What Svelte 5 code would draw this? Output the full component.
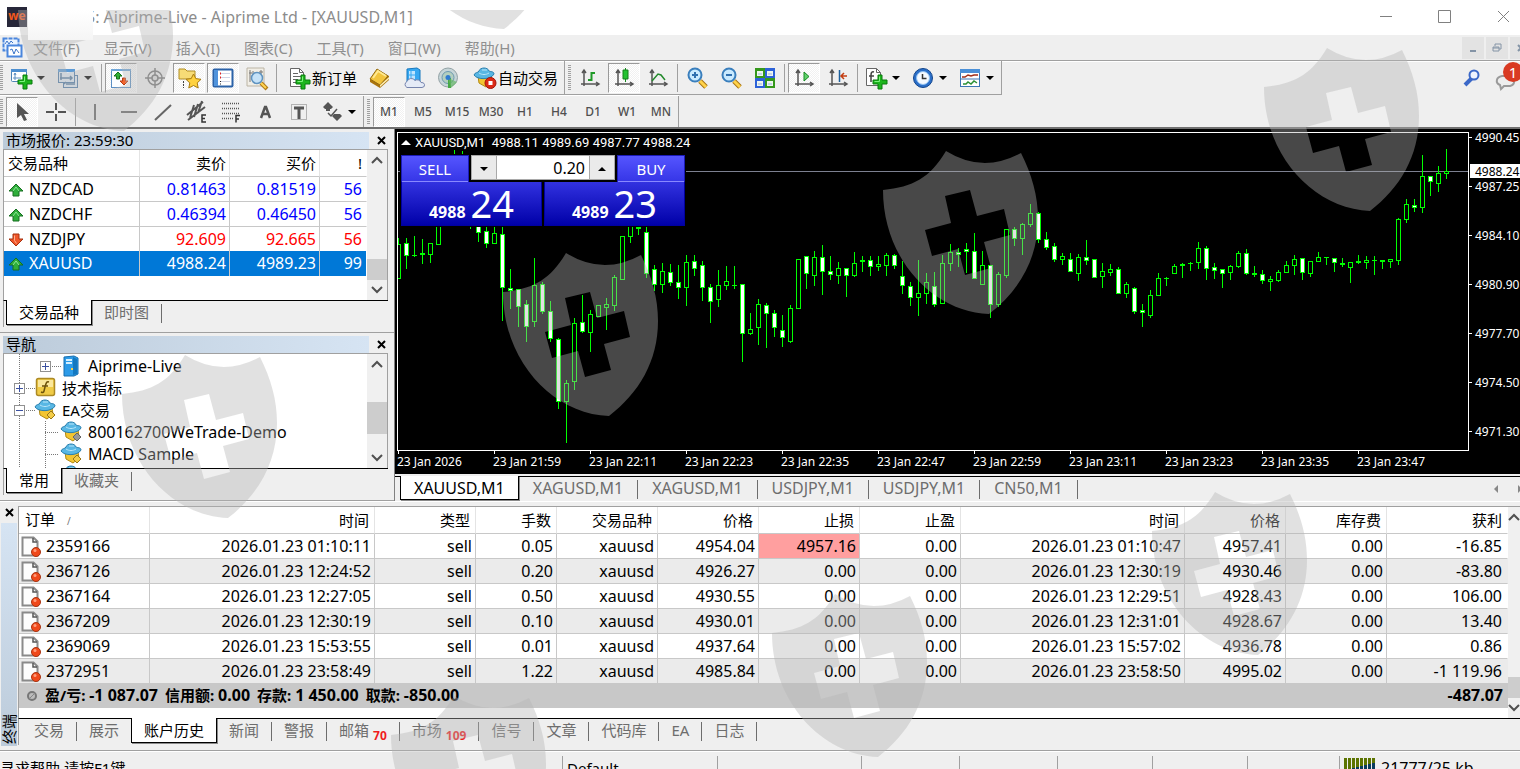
<script>
  let lots = $state('0.20');
  let period = $state('M1');

  const menus = ['文件(F)', '显示(V)', '插入(I)', '图表(C)', '工具(T)', '窗口(W)', '帮助(H)'];
  const periods = ['M1', 'M5', 'M15', 'M30', 'H1', 'H4', 'D1', 'W1', 'MN'];

  // Toolbar groups: each item is an icon button, '|' is a divider
  const standard = [
    { icon: 'newChart', drop: true, name: '新图表' },
    { icon: 'profiles', drop: true, name: '配置文件' },
    '|',
    { icon: 'market', on: true, name: '市场报价' },
    { icon: 'target', name: '数据窗口' },
    { icon: 'folder', on: true, name: '导航' },
    { icon: 'terminal', on: true, name: '终端' },
    { icon: 'tester', name: '策略测试' },
    '|',
    { icon: 'order', text: '新订单', name: '新订单' },
    { icon: 'book', name: 'MetaEditor' },
    { icon: 'cloud', name: '云' },
    { icon: 'signal', name: '信号' },
    { icon: 'auto', text: '自动交易', name: '自动交易' },
  ];
  const charting = [
    { icon: 'bars', name: '柱状图' },
    { icon: 'candles', on: true, name: '蜡烛图' },
    { icon: 'line', name: '折线图' },
    '|',
    { icon: 'zoomIn', name: '放大' },
    { icon: 'zoomOut', name: '缩小' },
    { icon: 'tiles', name: '平铺' },
    '|',
    { icon: 'scroll', on: true, name: '自动滚动' },
    { icon: 'shift', name: '图表平移' },
    '|',
    { icon: 'indicators', drop: true, name: '指标' },
    { icon: 'clock', drop: true, name: '时段' },
    { icon: 'templates', drop: true, name: '模板' },
  ];
  const drawing = [
    { icon: 'cursor', on: true, name: '光标' },
    { icon: 'cross', name: '十字线' },
    '|',
    { icon: 'vline', name: '垂直线' },
    { icon: 'hline', name: '水平线' },
    { icon: 'trend', name: '趋势线' },
    { icon: 'channel', name: '通道' },
    { icon: 'fibo', name: '斐波那契' },
    { icon: 'textA', name: '文字' },
    { icon: 'label', name: '文字标签' },
    { icon: 'arrows', drop: true, name: '箭头' },
  ];

  const plus = '<path d="M13 8h4v5h5v4h-5v5h-4v-5h-5v-4h5z" fill="#1db51d" stroke="#087a0c"/><path d="M14.500 9.500v5h-5" fill="none" stroke="#7df27d"/>';
  const axes = '<path d="M5 3v16M2 17h18M3 6l2-3 2 3M17 15l3 2-3 2" fill="none" stroke="#555" stroke-width="1.500"/>';
  const lens = '<path d="M14 14l6 6" stroke="#a87412" stroke-width="5"/><path d="M14 14l6 6" stroke="#ffd24a" stroke-width="3"/><circle cx="9" cy="8" r="6.500" fill="#c9eaff" stroke="#3a7fbd" stroke-width="2"/>';
  const hat = '<path d="M4 9l13 0 1 6-6 5-7-4z" fill="#f3c531" stroke="#b18a14"/><path d="M0 8c1-3 4-2 5-4 1-4 9-4 10 0 1 1 5 0 5 3-3 6-17 6-20 1z" fill="#58b7e4" stroke="#2b7fae"/><path d="M5 6c3 2 7 2 10 0M8 3h5" fill="none" stroke="#b9e6fa"/>';

  const icons = {
    newChart: '<rect x="1.500" y="2.500" width="15" height="12" rx="1" fill="#fff" stroke="#4d84b5"/><path d="M1 2h16v3H1z" fill="#4d8fd0"/><path d="M5 6v7M3 11h8M4 8l1-2 1 2" fill="none" stroke="#5b8ec0"/>' + plus,
    profiles: '<rect x="6.500" y="8.500" width="14" height="12" fill="#dfeaf3" stroke="#4f7ca8"/><rect x="1.500" y="2.500" width="16" height="13" fill="#dfeaf3" stroke="#4f7ca8"/><path d="M1 2h17v3H1z" fill="#5d9bd6"/><path d="M4 6v7M3 11h12M9 17h9M13 9l2 2-2 2M9 15l-2 2" fill="none" stroke="#557ba0" stroke-width="1.500"/>',
    market: '<rect x="1.500" y="2.500" width="19" height="18" fill="#fbfdff" stroke="#5a8fc4"/><path d="M1 2h20v2H1z" fill="#6fa6d8"/><path d="M8 5l4 4H9.500v3h-3V9H4z" fill="#2fae35" stroke="#17731c"/><path d="M14 18l4-4h-2.500v-3h-3v3H10z" fill="#f2642c" stroke="#b73b12"/>',
    target: '<g fill="none" stroke="#777" stroke-width="1.500"><circle cx="11" cy="11" r="7"/><path d="M11 1v20M1 11h20"/><circle cx="11" cy="11" r="3" fill="#ddd"/></g>',
    folder: '<path d="M1 2h6l2 2h8v8H1z" fill="#f7dc76" stroke="#b08d24"/><path d="M5.500 14v7" stroke="#444" stroke-dasharray="2 1"/><path d="M15.500 7l2.300 4.600 5.200.7-3.800 3.600 1 5.100-4.700-2.500-4.700 2.500 1-5.100L8 12.300l5.200-.7z" fill="#ffd23f" stroke="#a87b10"/>',
    terminal: '<rect x="1.500" y="2.500" width="19" height="17" rx="1" fill="#fff" stroke="#2b62a8" stroke-width="2"/><path d="M2 3h4v16H2z" fill="#4f93dc"/><path d="M9 6.500h9M9 10.500h9M9 14.500h9" stroke="#cfd5e6"/><path d="M8 6.500h1M8 10.500h1" stroke="#d22" stroke-width="2"/><path d="M8 14.500h1M8 17h1" stroke="#222"/>',
    tester: '<path d="M1 1h17v18H1z" fill="#f1eee6" stroke="#bbb4a4"/><path d="M4 3v12M7 4v4M15 3v8M3 6h3M13 5h4" stroke="#777" fill="none"/><path d="M15 16l6 6" stroke="#b17c19" stroke-width="4"/><path d="M15 16l5 5" stroke="#ffd452" stroke-width="2"/><circle cx="11" cy="11" r="5.500" fill="#c5e2f8" stroke="#5f93c0" stroke-width="1.500"/>',
    order: '<path d="M2.500 1.500h9l4 4v14h-13z" fill="#fff" stroke="#666"/><path d="M11.500 1.500v4h4M5 6.500h5M5 9.500h8M5 12.500h5M5 15.500h4" fill="none" stroke="#666"/>' + plus,
    book: '<path d="M1 13L9 3l11 6v4l-9 8-10-6z" fill="#a9730c"/><path d="M1 12L8 2l11 7-8 9z" fill="#f2c43d" stroke="#946a10"/><path d="M11 20l9-8v-2l-9 8z" fill="#fff0b4"/><path d="M4 11l5-7 8 5" fill="none" stroke="#ffe991" stroke-width="2"/>',
    cloud: '<path d="M4 2l10-1 3 2v12H4z" fill="#36a8f2" stroke="#1678be"/><path d="M6 4h6v8H6z" fill="#bfe5ff"/><path d="M8 4v8M6 8h6" stroke="#36a8f2"/><path d="M4 20.500a4 3.500 0 010-6 4.500 4.500 0 018-1 4 4 0 016 2 3 2.500 0 011 5z" fill="#e5ebf7" stroke="#7684ad"/>',
    signal: '<circle cx="11" cy="10.500" r="9.500" fill="#c6d5d8" stroke="#93a2a5"/><circle cx="11" cy="10.500" r="6" fill="#b4cfbf" stroke="#6c99b0"/><path d="M11 11h3v10h-3z" fill="#45a845"/><path d="M11 11l9 4-6 6z" fill="#66b866" opacity=".7"/><circle cx="11" cy="10.500" r="2.500" fill="#2f7bd0"/>',
    auto: hat + '<circle cx="16.500" cy="16" r="5.500" fill="#dc2a17" stroke="#a3160a"/><path d="M14.500 14h4v4h-4z" fill="#fff"/>',
    ea: hat + '<path d="M16 12l4 4-4 4-4-4z" fill="#f4cd48" stroke="#9a7717"/>',
    eaOff: hat + '<path d="M16 12l4 4-4 4-4-4z" fill="#999" stroke="#666"/>',
    bars: axes + '<path d="M12.500 5v9M9 13h3M13 6h3" stroke="#1f9a28" stroke-width="2" fill="none"/>',
    candles: axes + '<path d="M12.500 1v14" stroke="#148a1c"/><path d="M10 3h5v9h-5z" fill="#22c22f" stroke="#128019"/>',
    line: axes + '<path d="M5 14l6-7 3 1 4 5" stroke="#238a2c" fill="none" stroke-width="1.500"/>',
    zoomIn: lens + '<path d="M9 5v6M6 8h6" stroke="#2f70b0" stroke-width="2"/>',
    zoomOut: lens + '<path d="M6 8h6" stroke="#2f70b0" stroke-width="2"/>',
    tiles: '<path d="M1 1h10v10H1zM11 11h10v10H11z" fill="#35981c"/><path d="M11 1h10v10H11zM1 11h10v10H1z" fill="#2d62d8"/><path d="M3 4h6v5H3zM13 4h6v5h-6zM3 14h6v5H3zM13 14h6v5h-6z" fill="#eef6ee"/><path d="M4 7h4M14 7h4M4 17h4M14 17h4" stroke="#9bb5e0"/>',
    scroll: axes + '<path d="M11 5l5 4.500-5 4.500z" fill="#5fd06a" stroke="#158a20"/>',
    shift: axes + '<path d="M12.500 3v12" stroke="#1b5f9c" stroke-width="1.500"/><path d="M14 9h6M17 6l-3 3 3 3" stroke="#c33d12" stroke-width="1.500" fill="none"/>',
    indicators: '<path d="M1.500 1.500h10l4 4v13h-14z" fill="#fff" stroke="#666"/><path d="M11.500 1.500v4h4" fill="none" stroke="#666"/><path d="M9 5c-3-1-3 2-3 4v6M4 9h5" fill="none" stroke="#444" stroke-width="1.500"/>' + plus,
    clock: '<circle cx="11" cy="11" r="9.500" fill="#2b6fc9" stroke="#12458c"/><circle cx="11" cy="11" r="6.500" fill="#f4f9ff" stroke="#8fc0f2"/><path d="M10.500 7v4.500h4" fill="none" stroke="#333" stroke-width="1.500"/>',
    templates: '<rect x="1.500" y="2.500" width="19" height="17" fill="#fff" stroke="#3c76b4"/><path d="M1 2h20v4H1z" fill="#4a90d8"/><path d="M1 12h20" stroke="#3c76b4"/><path d="M3 10h3l3-2 3 1 3-1h4" stroke="#a12f1a" stroke-width="1.500" fill="none"/><path d="M4 17h3l2-2 3 2 3-3 3 2" stroke="#2a8f33" stroke-width="1.500" fill="none"/>',
    cursor: '<path d="M6 2v15l4-3 3 6 3-1-3-6h5z" fill="#555"/>',
    cross: '<path d="M11 2v7M11 13v7M1 11h8M13 11h8" stroke="#555" stroke-width="2"/>',
    vline: '<path d="M11 3v16" stroke="#666" stroke-width="2"/>',
    hline: '<path d="M3 11h16" stroke="#666" stroke-width="2"/>',
    trend: '<path d="M3 19L19 4" stroke="#666" stroke-width="2"/>',
    channel: '<path d="M1 14L17 1M2 19L19 6M4 17l4-13M8 16l4-13M12 12l4-12" stroke="#555" stroke-width="2"/><path d="M20 14h-4v7h4M16 17.500h3" fill="none" stroke="#333" stroke-width="1.500"/>',
    fibo: '<path d="M2 2.500h18M2 7.500h18M2 12.500h18M2 17.500h11" stroke="#555" stroke-width="1.500" stroke-dasharray="1 1"/><path d="M20 14.500h-4v7M16 18h3" fill="none" stroke="#333" stroke-width="1.500"/>',
    textA: '<path d="M7 17L11 6h1l4 11M8 13h7" fill="none" stroke="#555" stroke-width="2.500"/>',
    label: '<path d="M3.500 3.500h15v15h-15z" fill="none" stroke="#777" stroke-dasharray="1 1"/><path d="M6 7h10M11 7v11" stroke="#555" stroke-width="3"/>',
    arrows: '<path d="M2 6l5-5 5 5-2 2H4zM11 15l2-2h6l2 2-5 5zM5 6h4v4H5z" fill="#555"/><path d="M7 12l3 3 6-7" fill="none" stroke="#555" stroke-width="1.500"/>',
    server: '<path d="M3 2l10-1 4 2v16l-4 2H3z" fill="#2d9be8" stroke="#176fb0"/><path d="M12 2l4 2v15l-4 1z" fill="#1378c0"/><path d="M5 5h6M5 8h6" stroke="#d5f0ff" stroke-width="2"/><path d="M10 14h2" stroke="#ffd23f" stroke-width="2"/>',
    func: '<rect x="1.500" y="1.500" width="18" height="17" rx="2" fill="#f0cb47" stroke="#ad8a25" stroke-width="1.500"/><path d="M3 3h15v7H3z" fill="#fae79c"/><path d="M14 5c-3-1-3 2-4 5l-1 4c0 1-1 2-3 1M7 9h6" fill="none" stroke="#6d520a" stroke-width="1.500"/>',
    up: '<path d="M8 2l7 7h-4v5H5V9H1z" fill="#2fae3b" stroke="#176f20"/><path d="M5 9l3-4 3 4" fill="none" stroke="#8de896"/>',
    down: '<path d="M8 14L1 7h4V2h6v5h4z" fill="#f0562a" stroke="#a5310f"/><path d="M6.500 3.500v5l2 3" fill="none" stroke="#ffb08f"/>',
    doc: '<path d="M1.500 1.500h11l4 4v14h-15z" fill="#fdfdfd" stroke="#8a8a8a" stroke-width="2"/><path d="M12 2v4h4" fill="none" stroke="#555" stroke-width="1.500"/><circle cx="15" cy="16" r="4.500" fill="#f0491b" stroke="#a93410"/><circle cx="14" cy="14.500" r="1.500" fill="#ff9d7b"/>',
    mdi: '<rect x="1.500" y="1.500" width="15" height="12" fill="#eaf3ff" stroke="#4a86dd" stroke-width="2" stroke-dasharray="4 1"/><rect x="5.500" y="8.500" width="14" height="11" fill="#fff" stroke="#4a86dd" stroke-width="2"/><path d="M3 7l2-3 2 3 2-3 2 2M8 13l2-1 2 5 2-5 3 4" fill="none" stroke="#3b74c8"/>',
  };

  const symbols = [
    { name: 'NZDCAD', bid: '0.81463', ask: '0.81519', spread: 56, dir: 'up' },
    { name: 'NZDCHF', bid: '0.46394', ask: '0.46450', spread: 56, dir: 'up' },
    { name: 'NZDJPY', bid: '92.609', ask: '92.665', spread: 56, dir: 'down' },
    { name: 'XAUUSD', bid: '4988.24', ask: '4989.23', spread: 99, dir: 'up', selected: true },
  ];

  const tree = [
    { level: 2, icon: 'server', text: 'Aiprime-Live', box: '+' },
    { level: 1, icon: 'func', text: '技术指标', box: '+', cjk: true },
    { level: 1, icon: 'ea', text: 'EA交易', box: '-', cjk: true },
    { level: 2, icon: 'eaOff', text: '800162700WeTrade-Demo' },
    { level: 2, icon: 'ea', text: 'MACD Sample' },
    { level: 2, icon: 'ea', text: '' },
  ];

  // high, body top, body bottom, low, kind (h hollow, f filled, d doji)
  const TOP = 133;
  const STEP = 8;
  const candles = `238 244 279 279 h,238 243 256 269 f,236 255 255 257 d,239 253 255 264 d,243 243 255 263 h,215 215 245 245 h,
160 165 200 205 h,150 160 200 205 h,151 160 210 215 f,190 195 222 229 f,195 200 233 242 f,220 231 244 248 f,220 233 244 244 h,
220 234 288 321 f,269 288 291 309 f,289 289 307 327 f,300 304 327 342 f,258 285 322 327 h,282 284 312 314 f,301 311 339 342 f,
338 339 402 409 f,380 383 402 443 h,318 323 382 390 h,295 322 332 333 f,310 314 333 352 h,305 305 317 317 h,298 304 308 330 h,
275 277 306 311 h,236 236 280 280 h,215 220 237 243 h,215 220 229 235 d,226 232 274 278 f,265 269 285 291 f,263 271 285 293 h,
264 272 283 286 f,265 282 288 299 f,255 262 288 306 h,255 261 269 276 f,261 265 288 301 f,284 287 302 323 f,270 285 300 307 h,
266 281 286 290 h,266 285 285 289 d,284 284 334 362 f,313 329 334 335 h,299 304 328 345 h,303 305 314 348 f,310 313 328 337 f,
315 330 338 347 f,305 308 342 343 h,259 259 309 309 h,256 256 274 289 f,251 257 276 286 h,245 257 272 295 f,256 271 275 280 f,
262 268 276 284 h,268 268 276 297 f,252 263 276 277 h,256 260 262 272 d,256 260 267 276 f,256 264 267 271 h,253 255 266 276 h,
254 255 266 269 f,261 276 286 294 f,282 286 298 306 f,260 293 298 316 h,273 282 294 304 h,272 286 305 307 f,255 263 304 304 h,
244 252 264 271 h,248 252 255 267 f,243 249 252 273 f,233 251 279 279 f,251 265 285 285 h,265 265 305 318 f,272 274 305 307 h,
229 229 276 278 h,227 229 239 246 f,223 224 239 255 h,204 213 225 227 h,212 213 240 243 f,232 239 248 250 f,243 246 260 262 f,
253 256 260 265 h,253 259 272 272 f,254 257 274 281 h,240 257 261 265 f,259 259 278 278 f,263 271 277 288 h,264 269 273 276 h,
267 269 294 294 f,282 284 294 298 h,287 288 312 314 f,304 310 313 327 f,290 295 316 318 h,273 278 296 296 h,277 278 279 286 d,
264 266 274 274 h,263 264 266 278 d,262 263 264 271 d,242 248 263 269 h,246 248 269 280 f,263 267 271 279 f,269 269 274 288 f,
265 266 273 280 h,251 253 267 268 h,249 253 274 275 f,266 273 275 277 d,270 274 281 284 f,276 279 282 291 h,270 272 281 282 h,
261 265 273 273 h,255 259 266 275 h,258 258 273 280 f,261 261 274 277 h,252 257 262 262 h,257 257 258 265 d,258 258 263 272 f,
258 263 265 267 d,262 262 268 283 h,255 261 263 264 d,256 260 263 269 h,256 260 261 275 d,260 260 262 269 d,259 259 262 268 h,
218 219 261 265 h,199 204 220 223 h,199 205 208 212 f,155 176 208 213 h,176 176 182 196 f,166 173 184 192 h,149 171 174 179 h`
    .split(',')
    .map((row, i) => {
      const [high, top, bottom, low, kind] = row.trim().split(' ');
      return { x: i * STEP, high: high - TOP, top: top - TOP, bottom: bottom - TOP, low: low - TOP, kind };
    });

  const prices = ['4990.45', '4987.25', '4984.10', '4980.90', '4977.70', '4974.50', '4971.30'];
  const times = ['23 Jan 2026', '23 Jan 21:59', '23 Jan 22:11', '23 Jan 22:23', '23 Jan 22:35', '23 Jan 22:47',
    '23 Jan 22:59', '23 Jan 23:11', '23 Jan 23:23', '23 Jan 23:35', '23 Jan 23:47'];
  const chartTabs = ['XAUUSD,M1', 'XAGUSD,M1', 'XAGUSD,M1', 'USDJPY,M1', 'USDJPY,M1', 'CN50,M1'];

  const headers = ['时间', '类型', '手数', '交易品种', '价格', '止损', '止盈', '时间', '价格', '库存费', '获利'];
  const orders = [
    ['2359166', '2026.01.23 01:10:11', 'sell', '0.05', 'xauusd', '4954.04', '4957.16', '0.00', '2026.01.23 01:10:47', '4957.41', '0.00', '-16.85'],
    ['2367126', '2026.01.23 12:24:52', 'sell', '0.20', 'xauusd', '4926.27', '0.00', '0.00', '2026.01.23 12:30:19', '4930.46', '0.00', '-83.80'],
    ['2367164', '2026.01.23 12:27:05', 'sell', '0.50', 'xauusd', '4930.55', '0.00', '0.00', '2026.01.23 12:29:51', '4928.43', '0.00', '106.00'],
    ['2367209', '2026.01.23 12:30:19', 'sell', '0.10', 'xauusd', '4930.01', '0.00', '0.00', '2026.01.23 12:31:01', '4928.67', '0.00', '13.40'],
    ['2369069', '2026.01.23 15:53:55', 'sell', '0.01', 'xauusd', '4937.64', '0.00', '0.00', '2026.01.23 15:57:02', '4936.78', '0.00', '0.86'],
    ['2372951', '2026.01.23 23:58:49', 'sell', '1.22', 'xauusd', '4985.84', '0.00', '0.00', '2026.01.23 23:58:50', '4995.02', '0.00', '-1 119.96'],
  ];
  const totals = [['盈/亏:', '-1 087.07'], ['信用额:', '0.00'], ['存款:', '1 450.00'], ['取款:', '-850.00']];
  const terminalTabs = [
    { text: '交易' }, { text: '展示' }, { text: '账户历史', active: true }, { text: '新闻' }, { text: '警报' },
    { text: '邮箱', count: 70 }, { text: '市场', count: 109 }, { text: '信号' }, { text: '文章' },
    { text: '代码库' }, { text: 'EA' }, { text: '日志' },
  ];

  const shields = [[18, -32], [398, -134], [1264, 48], [883, 151], [503, 253], [122, 355], [1152, 492], [772, 594], [391, 696]];
</script>

{#snippet icon(name, size = 22)}
  <svg class="icon" width={size} height={size} viewBox="0 0 {size} {size}" aria-hidden="true">{@html icons[name]}</svg>
{/snippet}

{#snippet tools(items)}
  {#each items as item}
    {#if item === '|'}
      <span class="divider"></span>
    {:else}
      <button class="tool" class:on={item.on} class:drop={item.drop} class:wide={item.text} aria-label={item.name}>
        {@render icon(item.icon)}
        {#if item.text}<span>{item.text}</span>{/if}
        {#if item.drop}<i class="caret"></i>{/if}
      </button>
    {/if}
  {/each}
{/snippet}

{#snippet scrollbar(kind)}
  <div class="scrollbar {kind}">
    <button aria-label="向上滚动"><svg width="12" height="8"><path d="M1 7l5-5 5 5" /></svg></button>
    <span class="before"></span>
    <span class="thumb"></span>
    <span class="after"></span>
    <button aria-label="向下滚动"><svg width="12" height="8"><path d="M1 1l5 5 5-5" /></svg></button>
  </div>
{/snippet}

{#snippet closeMark()}
  <svg width="9" height="9" viewBox="0 0 9 9"><path d="M1 1l7 7M8 1l-7 7" stroke="#000" stroke-width="2" /></svg>
{/snippet}

<div class="app">
  <header class="titlebar">
    <span class="logo">we</span>
    <span class="title">5: Aiprime-Live - Aiprime Ltd - [XAUUSD,M1]</span>
    <div class="window-buttons">
      <button aria-label="最小化"><svg width="13" height="13"><path d="M1 6.500h12" /></svg></button>
      <button aria-label="最大化"><svg width="13" height="13"><path d="M.5.5h12v12H.5z" /></svg></button>
      <button aria-label="关闭"><svg width="13" height="13"><path d="M1 1l11 11M12 1L1 12" /></svg></button>
    </div>
  </header>

  <nav class="menubar">
    <span class="mdi-icon">{@render icon('mdi')}</span>
    {#each menus as menu}
      <button class="menu">{menu}</button>
    {/each}
    <div class="mdi-buttons">
      <button aria-label="最小化窗口"><svg width="12" height="12"><path d="M3 9h6" stroke-width="2" /></svg></button>
      <button aria-label="还原窗口"><svg width="12" height="12"><path d="M4 4V2h6v5H8M2 5h6v4H2zM2 6h6" /></svg></button>
      <button aria-label="关闭窗口"><svg width="12" height="12"><path d="M3 3l6 6M9 3l-6 6" stroke-width="2" /></svg></button>
    </div>
  </nav>

  <div class="toolbars">
    <div class="toolbar">
      <span class="grip first"></span>
      {@render tools(standard)}
      <span class="edge"></span>
      <span class="grip"></span>
      {@render tools(charting)}
      <span class="edge"></span>
    </div>
    <div class="alerts">
      <button class="search" aria-label="搜索">
        <svg width="18" height="18"><path d="M2 16l7-7" stroke="#3b68c8" stroke-width="4" /><circle cx="11" cy="6" r="4.500" fill="#eef3ff" stroke="#3b68c8" stroke-width="2" /></svg>
      </button>
      <button class="chat" aria-label="消息">
        <svg width="22" height="22"><path d="M6 19l-1-4c-5-2-4-8 2-9h9c5 2 4 9-1 10H9z" fill="#eee" stroke="#9a9a9a" stroke-width="2" /></svg>
        <span class="badge">1</span>
      </button>
    </div>
  </div>
  <div class="toolbars second">
    <div class="toolbar">
      <span class="grip first"></span>
      {@render tools(drawing)}
      <span class="edge"></span>
      <span class="grip"></span>
      {#each periods as p}
        <button class="tool period" class:on={p === period} onclick={() => (period = p)}>{p}</button>
      {/each}
      <span class="edge"></span>
    </div>
  </div>

  <main>
    <aside>
      <section class="panel">
        <div class="panel-title"><h2>市场报价: 23:59:30</h2><button aria-label="关闭">{@render closeMark()}</button></div>
        <div class="box market">
          <table>
            <colgroup><col class="c-symbol" /><col class="c-bid" /><col class="c-bid" /><col /></colgroup>
            <thead><tr><th>交易品种</th><th>卖价</th><th>买价</th><th>!</th></tr></thead>
            <tbody>
              {#each symbols as s}
                <tr class={s.dir} class:selected={s.selected}>
                  <td>{@render icon(s.dir, 16)}<span>{s.name}</span></td>
                  <td>{s.bid}</td>
                  <td>{s.ask}</td>
                  <td>{s.spread}</td>
                </tr>
              {/each}
            </tbody>
          </table>
          {@render scrollbar('low')}
        </div>
        <div class="tabs">
          <button class="tab active">交易品种</button>
          <button class="tab">即时图</button>
        </div>
      </section>

      <section class="panel">
        <div class="panel-title"><h2>导航</h2><button aria-label="关闭">{@render closeMark()}</button></div>
        <div class="box navigator">
          <ul>
            {#each tree as node}
              <li class="level{node.level}" class:cjk={node.cjk} class:leaf={!node.box}>
                <span class="joint">{#if node.box}<i class="toggle" class:plus={node.box === '+'}></i>{/if}</span>
                {@render icon(node.icon)}
                <span>{node.text}</span>
              </li>
            {/each}
          </ul>
          {@render scrollbar('mid')}
        </div>
        <div class="tabs">
          <button class="tab active">常用</button>
          <button class="tab">收藏夹</button>
        </div>
      </section>
    </aside>

    <section class="workspace">
      <div class="chart">
        <div class="plot">
          <svg class="series" shape-rendering="crispEdges">
            <rect x="0" y="38" width="100%" height="1" fill="#7c8090" />
            {#each candles as c}
              <rect x={c.x} y={c.high} width="1" height={c.low - c.high} fill="#0f0" />
              <rect x={c.x - 2} y={c.top} width="5" height={Math.max(c.bottom - c.top, 1)} fill="#0f0" />
              {#if c.kind !== 'd'}
                <rect x={c.x - 1} y={c.top + 1} width="3" height={Math.max(c.bottom - c.top - 2, 1)} fill={c.kind === 'f' ? '#fff' : '#000'} />
              {/if}
            {/each}
          </svg>
          <div class="quote"><i></i>XAUUSD,M1&nbsp; 4988.11 4989.69 4987.77 4988.24</div>
          <div class="trade">
            <div class="trade-top">
              <button class="side">SELL</button>
              <div class="lots">
                <button aria-label="减少"><i class="caret"></i></button>
                <input aria-label="手数" bind:value={lots} />
                <button aria-label="增加"><i class="caret flip"></i></button>
              </div>
              <button class="side">BUY</button>
            </div>
            <div class="trade-bottom">
              <button><b>4988</b><span>24</span></button>
              <button><b>4989</b><span>23</span></button>
            </div>
          </div>
        </div>
        <svg class="price-axis">
          {#each prices as p, i}
            <rect x="0" y={5 + i * 49} width="3" height="1" fill="#fff" />
            <text x="6" y={10 + i * 49}>{p}</text>
          {/each}
          <rect x="1" y="32" width="60" height="14" fill="#fff" />
          <text class="now" x="6" y="44">4988.24</text>
        </svg>
        <svg class="time-axis">
          {#each times as t, i}
            <rect x={1 + i * 96} y="0" width="1" height="3" fill="#fff" />
            <text x={i * 96} y="15">{t}</text>
          {/each}
        </svg>
      </div>
      <div class="chart-tabs">
        {#each chartTabs as t, i}
          <button class="tab" class:active={i === 0}>{t}</button>
        {/each}
        <span class="pager">
          <svg width="30" height="10"><path d="M5 1v8L1 5zM25 1v8l4-4z" fill="#888" /></svg>
        </span>
      </div>
    </section>
  </main>

  <section class="terminal">
    <div class="strip">
      <button aria-label="关闭">{@render closeMark()}</button>
      <div class="strip-title"><span>终端</span></div>
    </div>
    <div class="terminal-body">
      <div class="history">
        <table>
          <colgroup>
            <col class="w131" /><col class="w225" /><col class="w101" /><col class="w81" /><col class="w101" /><col class="w101" />
            <col class="w101" /><col class="w101" /><col class="w224" /><col class="w101" /><col class="w101" /><col />
          </colgroup>
          <thead>
            <tr><th>订单 <small>/</small></th>{#each headers as h}<th>{h}</th>{/each}</tr>
          </thead>
          <tbody>
            {#each orders as row}
              <tr>
                {#each row as cell, i}
                  <td class:stop={i === 6 && cell !== '0.00'}>
                    {#if i === 0}{@render icon('doc')}<span>{cell}</span>{:else}{cell}{/if}
                  </td>
                {/each}
              </tr>
            {/each}
          </tbody>
          <tfoot>
            <tr>
              <td colspan="11">
                <svg class="icon" width="20" height="16"><circle cx="11" cy="8" r="4" fill="#bbb" stroke="#777" stroke-width="2" /><path d="M8 11l6-6" stroke="#888" /></svg>
                {#each totals as [label, value]}<span class="total">{label} <b>{value}</b></span>{/each}
              </td>
              <td><b>-487.07</b></td>
            </tr>
          </tfoot>
        </table>
        {@render scrollbar('low narrow')}
      </div>
      <div class="tabs">
        {#each terminalTabs as t, i}
          <button class="tab" class:active={t.active} class:before-active={terminalTabs[i + 1]?.active}>
            {t.text}{#if t.count}<sub>{t.count}</sub>{/if}
          </button>
        {/each}
      </div>
    </div>
  </section>

  <footer class="status">
    <span class="help">寻求帮助,请按F1键</span>
    <span class="profile">Default</span>
    <span class="s144"></span><span class="s98"></span><span class="s98"></span><span class="s95"></span>
    <span class="s95"></span><span class="s92"></span>
    <span class="traffic">
      <svg width="32" height="20" shape-rendering="crispEdges">
        {#each Array(8) as _, i}
          <rect x={i * 4} y="0" width="3" height="20" fill="#0a3c5c" />
          <rect x={i * 4} y="0" width="3" height={12 - i} fill="#5c7400" />
        {/each}
      </svg>
      21777/25 kb
    </span>
  </footer>

  <div class="overlay" aria-hidden="true">
    <svg width="100%" height="100%">
      {#each shields as [x, y]}
        <path
          transform="translate({x} {y - 10})"
          fill-rule="evenodd"
          d="M63 0Q100 23 138 2C149 24 155 45 155 68C155 108 136 140 106 163C50 161 0 108 0 39C30 36 47 27 63 0ZM62 45L87 39L94 65L121 58L127 84L101 91L108 117L82 124L75 98L49 105L42 79L68 72Z"
        />
      {/each}
    </svg>
    <span class="mask"></span>
  </div>
</div>

<style>
  :global(body) {
    margin: 0;
    overflow: hidden;
  }

  .app {
    position: relative;
    display: flex;
    flex-direction: column;
    height: 100vh;
    overflow: hidden;
    background: #efefef;
    color: #000;
    font: 15px/22px "Noto Sans", "Noto Sans CJK SC", sans-serif;
  }

  .app > * {
    flex: none;
  }

  button {
    margin: 0;
    padding: 0;
    border: 0;
    background: none;
    color: inherit;
    font: inherit;
    white-space: nowrap;
  }

  table {
    border-spacing: 0;
    table-layout: fixed;
    width: 100%;
  }

  th,
  td {
    box-sizing: border-box;
    padding: 0 3px;
    font-weight: 400;
    text-align: right;
    white-space: nowrap;
  }

  .icon {
    flex: none;
    overflow: visible;
  }

  /* Title and menu */
  .titlebar {
    display: flex;
    align-items: center;
    height: 33px;
    padding-bottom: 2px;
    background: #fff;
    color: #8c8c8c;
    font-size: 16px;
  }

  .logo {
    width: 20px;
    height: 20px;
    margin-left: 7px;
    background: #28283a;
    color: #f2581d;
    font-size: 12px;
    font-weight: 700;
    line-height: 18px;
    text-align: center;
  }

  .title {
    margin-left: 59px;
  }

  .window-buttons {
    display: flex;
    gap: 46px;
    margin-left: auto;
    padding-right: 10px;
  }

  .window-buttons svg,
  .mdi-buttons svg {
    display: block;
    fill: none;
    stroke: #808080;
  }

  .menubar {
    display: flex;
    align-items: center;
    height: 25px;
    color: #8f8f8f;
  }

  .mdi-icon {
    width: 33px;
    padding-left: 2px;
    box-sizing: border-box;
    line-height: 0;
  }

  .menu {
    margin-right: 24px;
  }

  .mdi-buttons {
    display: flex;
    gap: 2px;
    margin-left: auto;
    margin-right: -12px;
  }

  .mdi-buttons button {
    padding: 5px;
    background: #e3e3e3;
  }

  .mdi-buttons svg {
    stroke: #8494a6;
  }

  /* Toolbars */
  .toolbars {
    display: flex;
    justify-content: space-between;
    height: 34px;
    border-top: 1px solid #a0a0a0;
    box-shadow: inset 0 1px #fff;
  }

  .toolbars.second {
    height: 32px;
    border-top: 0;
    border-bottom: 2px solid #707070;
    box-shadow: none;
  }

  .toolbar {
    display: flex;
    align-items: center;
    border-bottom: 1px solid #a0a0a0;
  }

  .second .toolbar {
    border-bottom: 0;
    border-top: 1px solid #fff;
  }

  .grip {
    width: 3px;
    height: 26px;
    margin: 0 2px 0 3px;
    background: repeating-linear-gradient(#a0a0a0 0 1px, #efefef 1px 2px);
  }

  .grip.first {
    margin: 0 2px 0 0;
  }

  .edge {
    align-self: stretch;
    width: 1px;
    background: #a0a0a0;
  }

  .divider {
    width: 1px;
    height: 28px;
    margin: 0 2px;
    background: #a0a0a0;
  }

  .tool {
    display: flex;
    align-items: center;
    justify-content: center;
    box-sizing: border-box;
    width: 32px;
    height: 30px;
    margin: 0 1px;
    border: 1px solid transparent;
  }

  .tool.on {
    border-color: #9a9a9a #fff #fff #9a9a9a;
    background: repeating-conic-gradient(#fff 0 25%, #f1f1f1 0 50%) 0 0 / 2px 2px;
  }

  .tool.drop {
    width: 45px;
    justify-content: flex-start;
    padding-left: 3px;
    gap: 5px;
  }

  .tool.wide {
    width: auto;
    gap: 2px;
    padding: 0 4px 0 7px;
  }

  .tool.period {
    color: #505050;
    font: 500 12px "Noto Sans", sans-serif;
  }

  .caret {
    border: 4px solid transparent;
    border-top-color: #000;
    border-bottom: 0;
  }

  .caret.flip {
    transform: scaleY(-1);
  }

  .alerts {
    display: flex;
    align-items: center;
    gap: 14px;
  }

  .alerts svg {
    display: block;
    fill: none;
  }

  .chat {
    position: relative;
    width: 25px;
    padding-top: 6px;
  }

  .badge {
    position: absolute;
    left: 8px;
    top: -2px;
    width: 20px;
    height: 20px;
    border-radius: 10px;
    background: #d93a22;
    color: #fff;
    line-height: 20px;
    text-align: center;
  }

  /* Docked panels */
  main {
    display: flex;
  }

  aside {
    width: 394px;
  }

  .panel {
    padding: 3px 6px 5px 3px;
    border-bottom: 1px solid #a0a0a0;
  }

  .panel-title {
    display: flex;
    align-items: center;
    height: 17px;
  }

  .panel-title h2 {
    flex: 1;
    margin: 0 6px 0 0;
    padding-left: 3px;
    background: linear-gradient(90deg, #bccbda, #d6e4f3);
    font-size: 15px;
    font-weight: 400;
    line-height: 17px;
  }

  .panel-title button,
  .strip button {
    width: 13px;
    line-height: 0;
  }

  .box {
    display: flex;
    border: solid #a0a0a0;
    border-width: 1px 1px 0;
    background: #fff;
  }

  .market {
    height: 150px;
    align-items: flex-start;
  }

  .market > table {
    flex: 1;
    width: auto;
  }

  .c-symbol {
    width: 136px;
  }

  .c-bid {
    width: 90px;
  }

  .market th,
  .market td {
    height: 25px;
    border-right: 1px solid #c8c8c8;
    border-bottom: 1px solid #c8c8c8;
  }

  .market th {
    height: 27px;
    border-right-color: #e4e4e4;
  }

  .market td {
    font-size: 16px;
    line-height: 23px;
  }

  .market tr > :first-child {
    padding-left: 4px;
    text-align: left;
  }

  .market td:first-child span {
    margin-left: 5px;
  }

  .market td .icon {
    vertical-align: -3px;
  }

  .market tr > :last-child {
    padding-right: 4px;
    border-right-color: transparent;
  }

  .market .up td:not(:first-child) {
    color: #00f;
  }

  .market .down td:not(:first-child) {
    color: #f00;
  }

  .market .down td {
    height: 24px;
    border-bottom: 0;
  }

  .market .selected td,
  .market .selected td:not(:first-child) {
    border-bottom: 0;
    background: #0078d7;
    background-clip: padding-box;
    color: #fff;
  }

  .scrollbar {
    display: flex;
    flex: none;
    flex-direction: column;
    align-self: stretch;
    width: 20px;
    background: #f0f0f0;
  }

  .scrollbar button {
    height: 20px;
    line-height: 0;
  }

  .scrollbar path {
    fill: none;
    stroke: #505050;
    stroke-width: 2;
  }

  .thumb {
    height: 21px;
    background: #cdcdcd;
  }

  .low .before {
    flex: 1;
  }

  .mid .before {
    flex: 2;
  }

  .mid .after {
    flex: 1;
  }

  .mid .thumb {
    height: 32px;
  }

  .narrow {
    width: 12px;
    overflow: hidden;
  }

  .tabs {
    display: flex;
    height: 26px;
    padding-left: 2px;
    border-top: 1px solid #000;
    border-left: 1px solid #a0a0a0;
  }

  .tab {
    position: relative;
    box-sizing: border-box;
    height: 22px;
    padding: 0 13px 0 12px;
    color: #6d6d6d;
  }

  .tab:not(.active):not(.before-active)::after {
    content: '';
    position: absolute;
    right: 0;
    top: 3px;
    bottom: 0;
    border-right: 1px solid #6d6d6d;
  }

  .tab.active {
    height: 25px;
    margin-top: -1px;
    padding: 0 12px;
    border: 1px solid #000;
    border-top: 0;
    background: #fff;
    box-shadow: 1px 1px #8a8a8a;
    color: #000;
  }

  .tab sub {
    padding-left: 4px;
    color: #f01c1c;
    font-size: 12px;
    font-weight: 700;
    line-height: 12px;
  }

  .navigator {
    height: 114px;
  }

  .navigator ul {
    position: relative;
    flex: 1;
    margin: 0;
    padding: 1px 0 0;
    overflow: hidden;
    list-style: none;
    background: repeating-linear-gradient(transparent 0 1px, #fff 1px 2px), linear-gradient(90deg, transparent 15px, #777 15px 16px, transparent 16px);
  }

  .navigator li {
    display: flex;
    align-items: center;
    height: 22px;
    font-size: 16px;
  }

  .navigator li.cjk {
    font-size: 15px;
  }

  .navigator li > span:last-child {
    margin-left: 5px;
  }

  .joint {
    display: flex;
    align-items: center;
    width: 21px;
    height: 22px;
    margin-left: 10px;
    background: repeating-linear-gradient(90deg, #777 0 1px, transparent 1px 2px) 10px 11px / 11px 1px no-repeat;
  }

  .level2 .joint {
    margin-left: 36px;
  }

  .leaf .joint {
    background:
      repeating-linear-gradient(90deg, #777 0 1px, transparent 1px 2px) 5px 11px / 14px 1px no-repeat,
      repeating-linear-gradient(#777 0 1px, transparent 1px 2px) 5px 0 / 1px 100% no-repeat;
  }

  .toggle {
    width: 9px;
    height: 9px;
    border: 1px solid #919191;
    background: linear-gradient(#3a50a0, #3a50a0) 50% 50% / 7px 1px no-repeat, #fff;
  }

  .toggle.plus {
    background: linear-gradient(#3a50a0, #3a50a0) 50% 50% / 7px 1px no-repeat, linear-gradient(#3a50a0, #3a50a0) 50% 50% / 1px 7px no-repeat, #fff;
  }

  /* Chart window */
  .workspace {
    display: flex;
    flex: 1;
    flex-direction: column;
    min-width: 0;
    border-left: 1px solid #808080;
  }

  .chart {
    display: grid;
    flex: 1;
    grid-template-columns: 1fr 51px;
    grid-template-rows: 1fr 23px;
    padding: 3px 0 0 2px;
    background: #000;
    color: #fff;
    font: 12px "Noto Sans", sans-serif;
  }

  .plot {
    position: relative;
    min-width: 0;
    border: 1px solid #fff;
    overflow: hidden;
  }

  .series {
    position: absolute;
    width: 100%;
    height: 100%;
  }

  .price-axis,
  .time-axis {
    display: block;
    width: 100%;
    height: 100%;
    fill: #fff;
  }

  .time-axis {
    grid-column: 1 / 3;
  }

  .now {
    fill: #000;
  }

  .quote {
    position: relative;
    display: flex;
    align-items: center;
    height: 19px;
    padding-left: 3px;
    font: 13px Roboto, sans-serif;
    white-space: pre;
  }

  .quote i {
    margin-right: 4px;
    border: 5px solid transparent;
    border-top: 0;
    border-bottom-color: #fff;
  }

  .trade {
    position: absolute;
    left: 2px;
    top: 21px;
    width: 284px;
    padding: 1px;
    background: #000;
    font: 16px "Noto Sans", sans-serif;
  }

  .trade-top {
    display: flex;
    gap: 2px;
    height: 27px;
  }

  .side {
    flex: none;
    width: 68px;
    background: linear-gradient(#5555ff, #3535e6);
    border: 1px solid #1a1ab8;
    border-bottom: 0;
    box-shadow: inset 0 -1px #8888ff;
    font-size: 15px;
  }

  .lots {
    display: flex;
    flex: 1;
    min-width: 0;
    height: 25px;
    box-sizing: border-box;
    border: 1px solid #a9a9a9;
  }

  .lots button {
    flex: none;
    width: 24px;
    background: #eaeaea;
    line-height: 0;
  }

  .lots .caret {
    display: inline-block;
    border-top-color: #000;
  }

  .lots input {
    flex: 1;
    min-width: 0;
    padding: 0 4px;
    border: solid #a9a9a9;
    border-width: 0 1px;
    background: #fff;
    color: #000;
    font: inherit;
    text-align: right;
  }

  .trade-bottom {
    display: flex;
    gap: 2px;
  }

  .trade-bottom button {
    display: flex;
    flex: 1;
    align-items: baseline;
    justify-content: center;
    gap: 5px;
    height: 44px;
    border: 1px solid #0000a0;
    border-top: 0;
    background: linear-gradient(#3232e0, #0000a8);
    line-height: 42px;
  }

  .trade-bottom span {
    font-size: 38px;
  }

  .chart-tabs {
    display: flex;
    height: 24px;
    margin-top: 2px;
    padding-left: 5px;
    border-top: 1px solid #000;
    font-size: 16px;
  }

  .chart-tabs .tab {
    padding: 0 15px 0 14px;
  }

  .chart-tabs .tab.active {
    height: 24px;
    padding: 0 13px;
  }

  .pager {
    align-self: center;
    margin-left: auto;
    margin-right: -3px;
    line-height: 0;
  }

  /* Terminal */
  .terminal {
    display: flex;
    padding-top: 4px;
    border-top: 1px solid #fff;
    border-bottom: 1px solid #a0a0a0;
  }

  .strip {
    display: flex;
    flex-direction: column;
    align-items: center;
    width: 18px;
    padding: 2px 0 4px;
    box-sizing: border-box;
  }

  .strip button {
    padding-bottom: 6px;
  }

  .strip-title {
    flex: 1;
    display: flex;
    align-items: flex-end;
    width: 16px;
    background: linear-gradient(#d6e4f3, #bccbda);
  }

  .strip-title span {
    writing-mode: vertical-rl;
    text-orientation: sideways;
    transform: rotate(180deg);
    line-height: 16px;
    padding-top: 2px;
  }

  .terminal-body {
    flex: 1;
    min-width: 0;
    padding-bottom: 5px;
  }

  .history {
    display: flex;
    align-items: flex-start;
    height: 211px;
    border-top: 1px solid #a0a0a0;
    border-left: 1px solid #a0a0a0;
    background: #fff;
  }

  .history > table {
    flex: 1;
    width: auto;
    min-width: 0;
  }

  .w131 { width: 131px; }
  .w225 { width: 225px; }
  .w224 { width: 224px; }
  .w101 { width: 101px; }
  .w81 { width: 81px; }

  .history th,
  .history td {
    height: 25px;
    border-right: 1px solid #c8c8c8;
    border-bottom: 1px solid #c8c8c8;
    font-size: 16px;
    line-height: 23px;
  }

  .history th {
    height: 27px;
    padding-right: 5px;
    border-right-color: #e4e4e4;
    font-size: 15px;
  }

  .history tr > :first-child {
    text-align: left;
    padding-left: 2px;
  }

  .history th:first-child {
    padding-left: 6px;
  }

  .history small {
    padding-left: 8px;
    color: #777;
    font-size: 10px;
  }

  .history td:first-child .icon {
    vertical-align: -6px;
  }

  .history td:first-child > span {
    margin-left: 3px;
  }

  .history tr > :last-child {
    padding-right: 5px;
    border-right-color: transparent;
  }

  .history tbody tr:nth-child(even) {
    background: #ebebeb;
  }

  .history tbody tr:last-child td {
    height: 24px;
    border-bottom: 0;
  }

  .history .stop {
    background: #ff9f9f;
    background-clip: padding-box;
  }

  .history tfoot td {
    border: 0;
    background: #c8c8c8;
    font-size: 15px;
    font-weight: 700;
  }

  .history tfoot td:first-child .icon {
    vertical-align: -3px;
  }

  .history b {
    font-size: 16px;
    font-weight: 700;
  }

  .history tfoot td:first-child > .total {
    margin-left: 0;
    margin-right: 7px;
  }

  .terminal .tabs {
    padding-left: 3px;
  }

  .terminal .tab.active {
    margin-left: -1px;
  }

  .status {
    display: flex;
    height: 32px;
    padding-top: 4px;
    border-top: 1px solid #fff;
    line-height: 24px;
  }

  .status > span {
    box-sizing: border-box;
    border-right: 1px solid #a0a0a0;
  }

  .help { width: 563px; }
  .status .profile { width: 155px; padding-left: 4px; }
  .s144 { width: 144px; }
  .s98 { width: 98px; }
  .s95 { width: 95px; }
  .s92 { width: 92px; }

  .status .traffic {
    display: flex;
    flex: 1;
    align-items: flex-start;
    gap: 5px;
    padding-left: 4px;
    border-right: 0;
    font-size: 16px;
  }

  .traffic svg {
    margin-top: 2px;
  }

  /* Shields laid over the whole window */
  .overlay {
    position: absolute;
    inset: 10px 0 0;
    overflow: hidden;
    pointer-events: none;
  }

  .overlay svg {
    display: block;
    fill: rgba(180, 180, 180, 0.4);
  }

  .mask {
    position: absolute;
    left: 28px;
    top: 0;
    width: 65px;
    height: 30px;
    background: linear-gradient(#fff, #f5f5f5);
  }
</style>
